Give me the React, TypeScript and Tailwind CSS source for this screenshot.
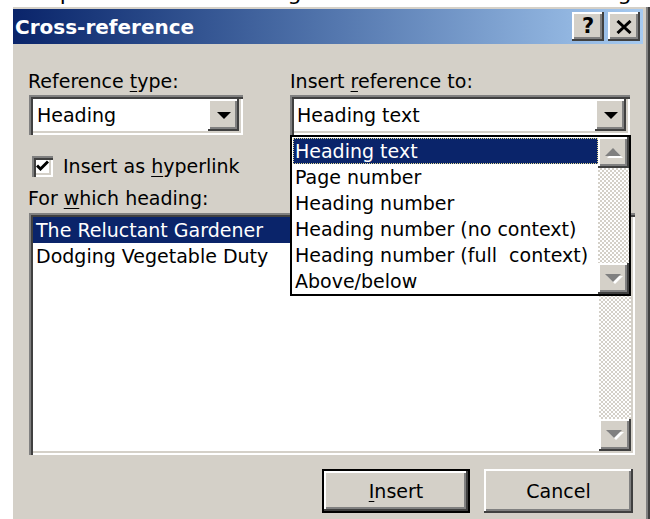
import React from "react";

// Classic 3D bevels, drawn at double scale
const sunken =
  "shadow-[inset_2px_2px_0_#808080,inset_4px_4px_0_#404040,inset_-2px_-2px_0_#ffffff,inset_-4px_-4px_0_#d4d0c8]";
const raised =
  "shadow-[inset_-2px_-2px_0_#404040,inset_2px_2px_0_#ffffff,inset_-4px_-4px_0_#808080,inset_4px_4px_0_#d4d0c8]";
const checker =
  "bg-[image:repeating-conic-gradient(#d4d0c8_0%_25%,#ffffff_0%_50%)] bg-[length:4px_4px]";

function ComboArrow() {
  return (
    <svg width="14" height="7" viewBox="0 0 14 7">
      <polygon points="0,0 14,0 7,7" fill="#000" />
    </svg>
  );
}

function ScrollArrow({ up }: { up?: boolean }) {
  const pts = up ? "0,8 16,8 8,0" : "0,0 16,0 8,8";
  return (
    <svg width="18" height="10" viewBox="0 0 18 10">
      <polygon points={pts} transform="translate(2,2)" fill="#ffffff" />
      <polygon points={pts} fill="#808080" />
    </svg>
  );
}

function Combo({ value, width, textPad }: { value: string; width: string; textPad: string }) {
  return (
    <div className={`${width} h-[40px] bg-white p-[4px] flex ${sunken}`}>
      <div className={`flex-1 flex items-center ${textPad} leading-[24px]`}>{value}</div>
      <div className={`w-[31px] bg-[#d4d0c8] flex items-center justify-center ${raised}`}>
        <ComboArrow />
      </div>
    </div>
  );
}

function Scrollbar({ btn, width }: { btn: string; width: string }) {
  return (
    <div className={`${width} flex flex-col`}>
      <div className={`${btn} bg-[#d4d0c8] flex items-center justify-center ${raised}`}>
        <ScrollArrow up />
      </div>
      <div className={`flex-1 ${checker}`} />
      <div className={`${btn} bg-[#d4d0c8] flex items-center justify-center ${raised}`}>
        <ScrollArrow />
      </div>
    </div>
  );
}

const referenceOptions = [
  "Heading text",
  "Page number",
  "Heading number",
  "Heading number (no context)",
  "Heading number (full\u00a0 context)",
  "Above/below",
];

export default function App() {
  return (
    <div className="w-[650px] h-[519px] bg-white overflow-hidden flex flex-col font-['DejaVu_Sans',Verdana,sans-serif] text-black">
      {/* document line peeking above the dialog */}
      <div className="h-[7px] shrink-0 overflow-hidden">
        <p className="-mt-[20px] -ml-[2px] text-[22px] leading-[26px] whitespace-nowrap">
          Example of a short heading and then the second heading
        </p>
      </div>

      <div className="ml-[13px] flex-1 flex flex-col bg-[#d4d0c8] pt-[2px] pr-[7px] shadow-[inset_-2px_0_0_#404040,inset_-4px_0_0_#808080]">
        {/* title bar */}
        <div className="h-[35px] shrink-0 flex items-center justify-between pl-[2px] pr-[3px] bg-linear-to-r from-[#0a246a] to-[#a6caf0]">
          <span className="text-white font-bold text-[20px] leading-none">Cross-reference</span>
          <div className="flex gap-[4px]">
            <div className={`w-[32px] h-[29px] bg-[#d4d0c8] flex items-center justify-center ${raised}`}>
              <span className="font-bold text-[21px] leading-none -mt-[1px]">?</span>
            </div>
            <div className={`w-[32px] h-[29px] bg-[#d4d0c8] flex items-center justify-center ${raised}`}>
              <svg width="16" height="14" viewBox="0 0 16 14">
                <path d="M1.5 1 L14.5 13 M14.5 1 L1.5 13" stroke="#000" strokeWidth="3" />
              </svg>
            </div>
          </div>
        </div>

        {/* dialog body */}
        <div className="relative flex-1 flex flex-col pl-[16px] pt-[25px] text-[19px]">
          <div className="flex">
            <div className="w-[214px] flex flex-col">
              <div className="leading-[24px] -ml-[1px]">
                Reference <span className="underline underline-offset-[3px]">t</span>ype:
              </div>
              <div className="mt-[2px]">
                <Combo value="Heading" width="w-[214px]" textPad="pl-[4px]" />
              </div>
            </div>
            <div className="ml-[47px] w-[340px] flex flex-col">
              <div className="leading-[24px]">
                Insert <span className="underline underline-offset-[3px]">r</span>eference to:
              </div>
              <div className="mt-[2px]">
                <Combo value="Heading text" width="w-[340px]" textPad="pl-[3px]" />
              </div>
            </div>
          </div>

          <div className="mt-[20px] ml-[3px] h-[22px] flex items-center">
            <div className={`w-[21px] h-[21px] bg-white flex items-center justify-center ${sunken}`}>
              <svg width="13" height="12" viewBox="0 0 13 12">
                <path d="M1 5.5 L4.5 9 L12 1.5" fill="none" stroke="#000" strokeWidth="3" />
              </svg>
            </div>
            <span className="ml-[10px] leading-[22px]">
              Insert as <span className="underline underline-offset-[3px]">h</span>yperlink
            </span>
          </div>

          <div className="mt-[9px] leading-[24px] -ml-[1px]">
            For <span className="underline underline-offset-[3px]">w</span>hich heading:
          </div>

          <div className={`mt-[3px] w-[606px] h-[242px] bg-white p-[4px] flex ${sunken}`}>
            <div className="flex-1 flex flex-col">
              <div className="h-[26px] leading-[26px] pl-[3px] bg-[#0a246a] text-white">The Reluctant Gardener</div>
              <div className="h-[26px] leading-[26px] pl-[3px]">Dodging Vegetable Duty</div>
            </div>
            <Scrollbar btn="h-[32px]" width="w-[32px]" />
          </div>

          <div className="mt-[14px] pr-[10px] flex justify-end gap-[14px]">
            <div className="w-[148px] h-[44px] border-2 border-black">
              <div className={`w-full h-full flex items-center justify-center leading-[24px] ${raised}`}>
                <span>
                  <span className="underline underline-offset-[3px]">I</span>nsert
                </span>
              </div>
            </div>
            <div className={`w-[149px] h-[44px] flex items-center justify-center leading-[24px] ${raised}`}>
              Cancel
            </div>
          </div>

          {/* open drop-down list of the "Insert reference to" combo */}
          <div className="absolute left-[277px] top-[91px] w-[341px] h-[161px] border-2 border-black bg-white flex">
            <div className="flex-1 flex flex-col pt-[1px] pl-[1px]">
              {referenceOptions.map((opt, i) =>
                i === 0 ? (
                  <div
                    key={opt}
                    className="h-[26px] leading-[24px] pl-[1px] bg-[#0a246a] text-white border border-dotted border-[#e0d890] whitespace-nowrap"
                  >
                    {opt}
                  </div>
                ) : (
                  <div key={opt} className="h-[26px] leading-[26px] pl-[2px] whitespace-nowrap">
                    {opt}
                  </div>
                )
              )}
            </div>
            <Scrollbar btn="h-[31px]" width="w-[31px]" />
          </div>
        </div>
      </div>
    </div>
  );
}
